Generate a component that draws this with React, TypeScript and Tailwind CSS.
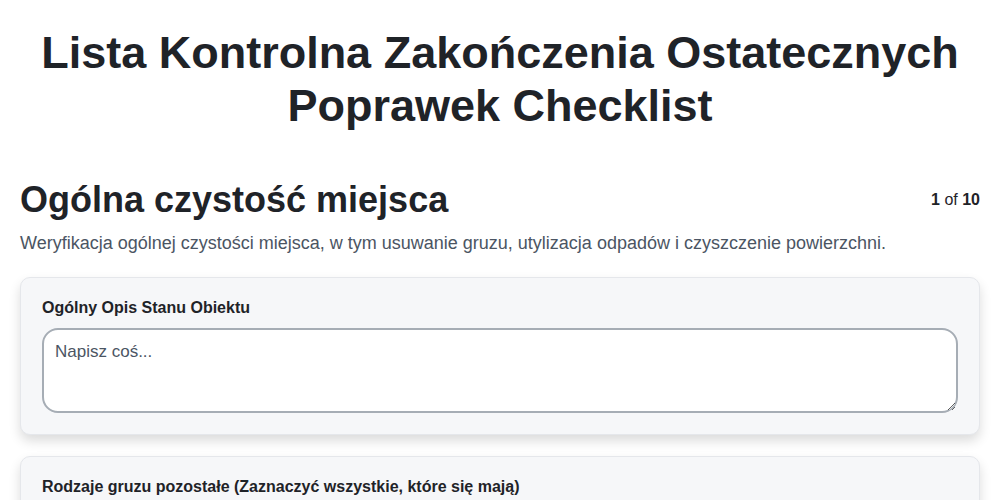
export default function App() {
  return (
    <main
      className="min-h-screen bg-white px-5 text-[#1f2328]"
      style={{ fontFamily: '"Liberation Sans", Arial, sans-serif' }}
    >
      <h1 className="pt-[26px] text-center text-[45px] font-bold leading-[53px]">
        Lista Kontrolna Zakończenia Ostatecznych Poprawek Checklist
      </h1>

      <div className="mt-[47px] flex items-start justify-between">
        <h2 className="text-[36px] font-bold leading-[42px]">Ogólna czystość miejsca</h2>
        <div className="pt-[9px] text-[16px]">
          <span className="font-bold">1</span> of <span className="font-bold">10</span>
        </div>
      </div>
      <p className="mt-[9px] text-[18px] leading-[27px] text-[#4b5563]">
        Weryfikacja ogólnej czystości miejsca, w tym usuwanie gruzu, utylizacja odpadów i czyszczenie powierzchni.
      </p>

      <section className="mt-[20px] rounded-[10px] border border-[#e5e7eb] bg-[#f6f7f9] px-[21px] pb-[21px] pt-[20px] shadow-[0_6px_12px_rgba(0,0,0,0.14)]">
        <label className="block text-[16px] font-bold leading-5">Ogólny Opis Stanu Obiektu</label>
        <textarea
          placeholder="Napisz coś..."
          className="mt-[10px] block h-[85px] w-full rounded-[16px] border-2 border-[#a6adb5] bg-white px-[11px] py-[9px] text-[17px] placeholder:text-[#4b5563]"
        />
      </section>

      <section className="mt-[21px] rounded-[10px] border border-[#e5e7eb] bg-[#f6f7f9] px-[21px] pb-[21px] pt-[20px] shadow-[0_6px_12px_rgba(0,0,0,0.14)]">
        <label className="block text-[16px] font-bold leading-5">
          Rodzaje gruzu pozostałe (Zaznaczyć wszystkie, które się mają)
        </label>
      </section>
    </main>
  );
}
